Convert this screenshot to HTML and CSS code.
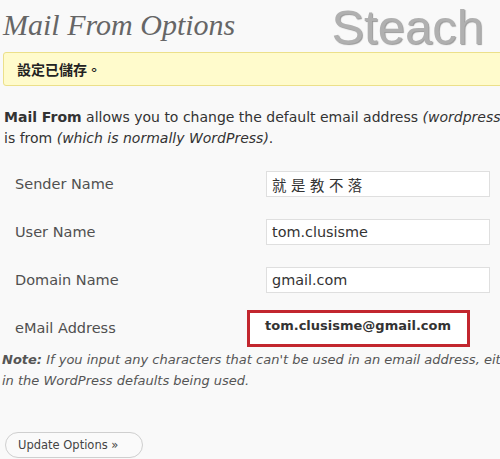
FILE: index.html
```html
<!DOCTYPE html>
<html>
<head>
<meta charset="utf-8">
<link rel="stylesheet" href="styles.css">
</head>
<body>
<div class="page">
  <div class="header">
    <h2 class="title">Mail From Options</h2>
    <div class="mark">Steach</div>
  </div>
  <div class="notice"><strong>設定已儲存。</strong></div>
  <p class="intro"><strong>Mail From</strong> allows you to change the default email address <em>(wordpress@yourdomain.com)</em> and name that email<br>is from <em>(which is normally WordPress)</em>.</p>
  <div class="form">
    <div class="label">Sender Name</div>
    <div class="field"><div class="input">就 是 教 不 落</div></div>
    <div class="label">User Name</div>
    <div class="field"><div class="input">tom.clusisme</div></div>
    <div class="label">Domain Name</div>
    <div class="field"><div class="input">gmail.com</div></div>
    <div class="label">eMail Address</div>
    <div class="field email-field"><div class="email">tom.clusisme@gmail.com</div></div>
  </div>
  <p class="note"><strong>Note:</strong> If you input any characters that can't be used in an email address, either the address or name will be reset, resulting<br>in the WordPress defaults being used.</p>
  <div class="actions"><button class="btn">Update Options »</button></div>
</div>
</body>
</html>
```
FILE: styles.css
```css
html, body {
  margin: 0;
  padding: 0;
  background: #f9f9f9;
  overflow: hidden;
}
.page {
  width: 500px;
  height: 459px;
  overflow: hidden;
  font-family: "DejaVu Sans", Verdana, sans-serif;
  color: #333;
}
.header {
  display: flex;
  justify-content: space-between;
  align-items: flex-start;
  height: 52px;
}
.title {
  margin: 7px 0 0 3px;
  font-family: "Liberation Serif", "DejaVu Serif", serif;
  font-style: italic;
  font-weight: normal;
  font-size: 30px;
  line-height: 36px;
  color: #666;
  white-space: nowrap;
}
.mark {
  margin: 0 16px 0 0;
  font-family: "Liberation Sans", Arial, sans-serif;
  font-size: 49px;
  line-height: 54px;
  color: #b0b0b0;
  text-shadow: 1px 1px 1px #999;
}
.notice {
  margin-left: 3px;
  width: 520px;
  height: 34px;
  box-sizing: border-box;
  border: 1px solid #ece08a;
  border-radius: 3px;
  background: #fffbcc;
  padding: 0 13px;
  display: flex;
  align-items: center;
  font-family: "Noto Sans CJK TC", sans-serif;
  font-size: 14px;
  color: #222;
}
.intro {
  margin: 21px 0 0 4px;
  font-size: 14px;
  line-height: 21px;
  white-space: nowrap;
  color: #333;
}
.intro em, .note em { font-style: italic; }
.form {
  display: grid;
  grid-template-columns: 247px 243px;
  grid-auto-rows: 48px;
  align-items: center;
  margin-top: 11px;
}
.label {
  padding-left: 15px;
  font-size: 14.5px;
  color: #505050;
}
.field { padding-left: 19px; }
.input {
  box-sizing: border-box;
  width: 224px;
  height: 26px;
  border: 1px solid #dfdfdf;
  background: #fff;
  padding: 0 5px;
  display: flex;
  align-items: center;
  font-size: 14.4px;
  color: #333;
  font-family: "DejaVu Sans", "Noto Sans CJK TC", sans-serif;
}
.email-field { padding-left: 0; }
.email {
  box-sizing: border-box;
  width: 223px;
  height: 37px;
  border: 3px solid #c2262e;
  background: #fff;
  padding: 0 0 6px 15px;
  display: flex;
  align-items: center;
  font-weight: bold;
  font-size: 13px;
  color: #333;
}
.note {
  margin: -3px 0 0 2px;
  font-size: 13px;
  line-height: 21px;
  font-style: italic;
  white-space: nowrap;
  color: #555;
}
.actions { margin-top: 41px; padding-left: 5px; }
.btn {
  box-sizing: border-box;
  width: 138px;
  height: 26px;
  border: 1px solid #cfcfcf;
  border-radius: 13px;
  background: #fafafa;
  font-family: "DejaVu Sans", Verdana, sans-serif;
  font-size: 11.5px;
  color: #444;
  padding: 0 0 0 12px;
  text-align: left;
}
```
